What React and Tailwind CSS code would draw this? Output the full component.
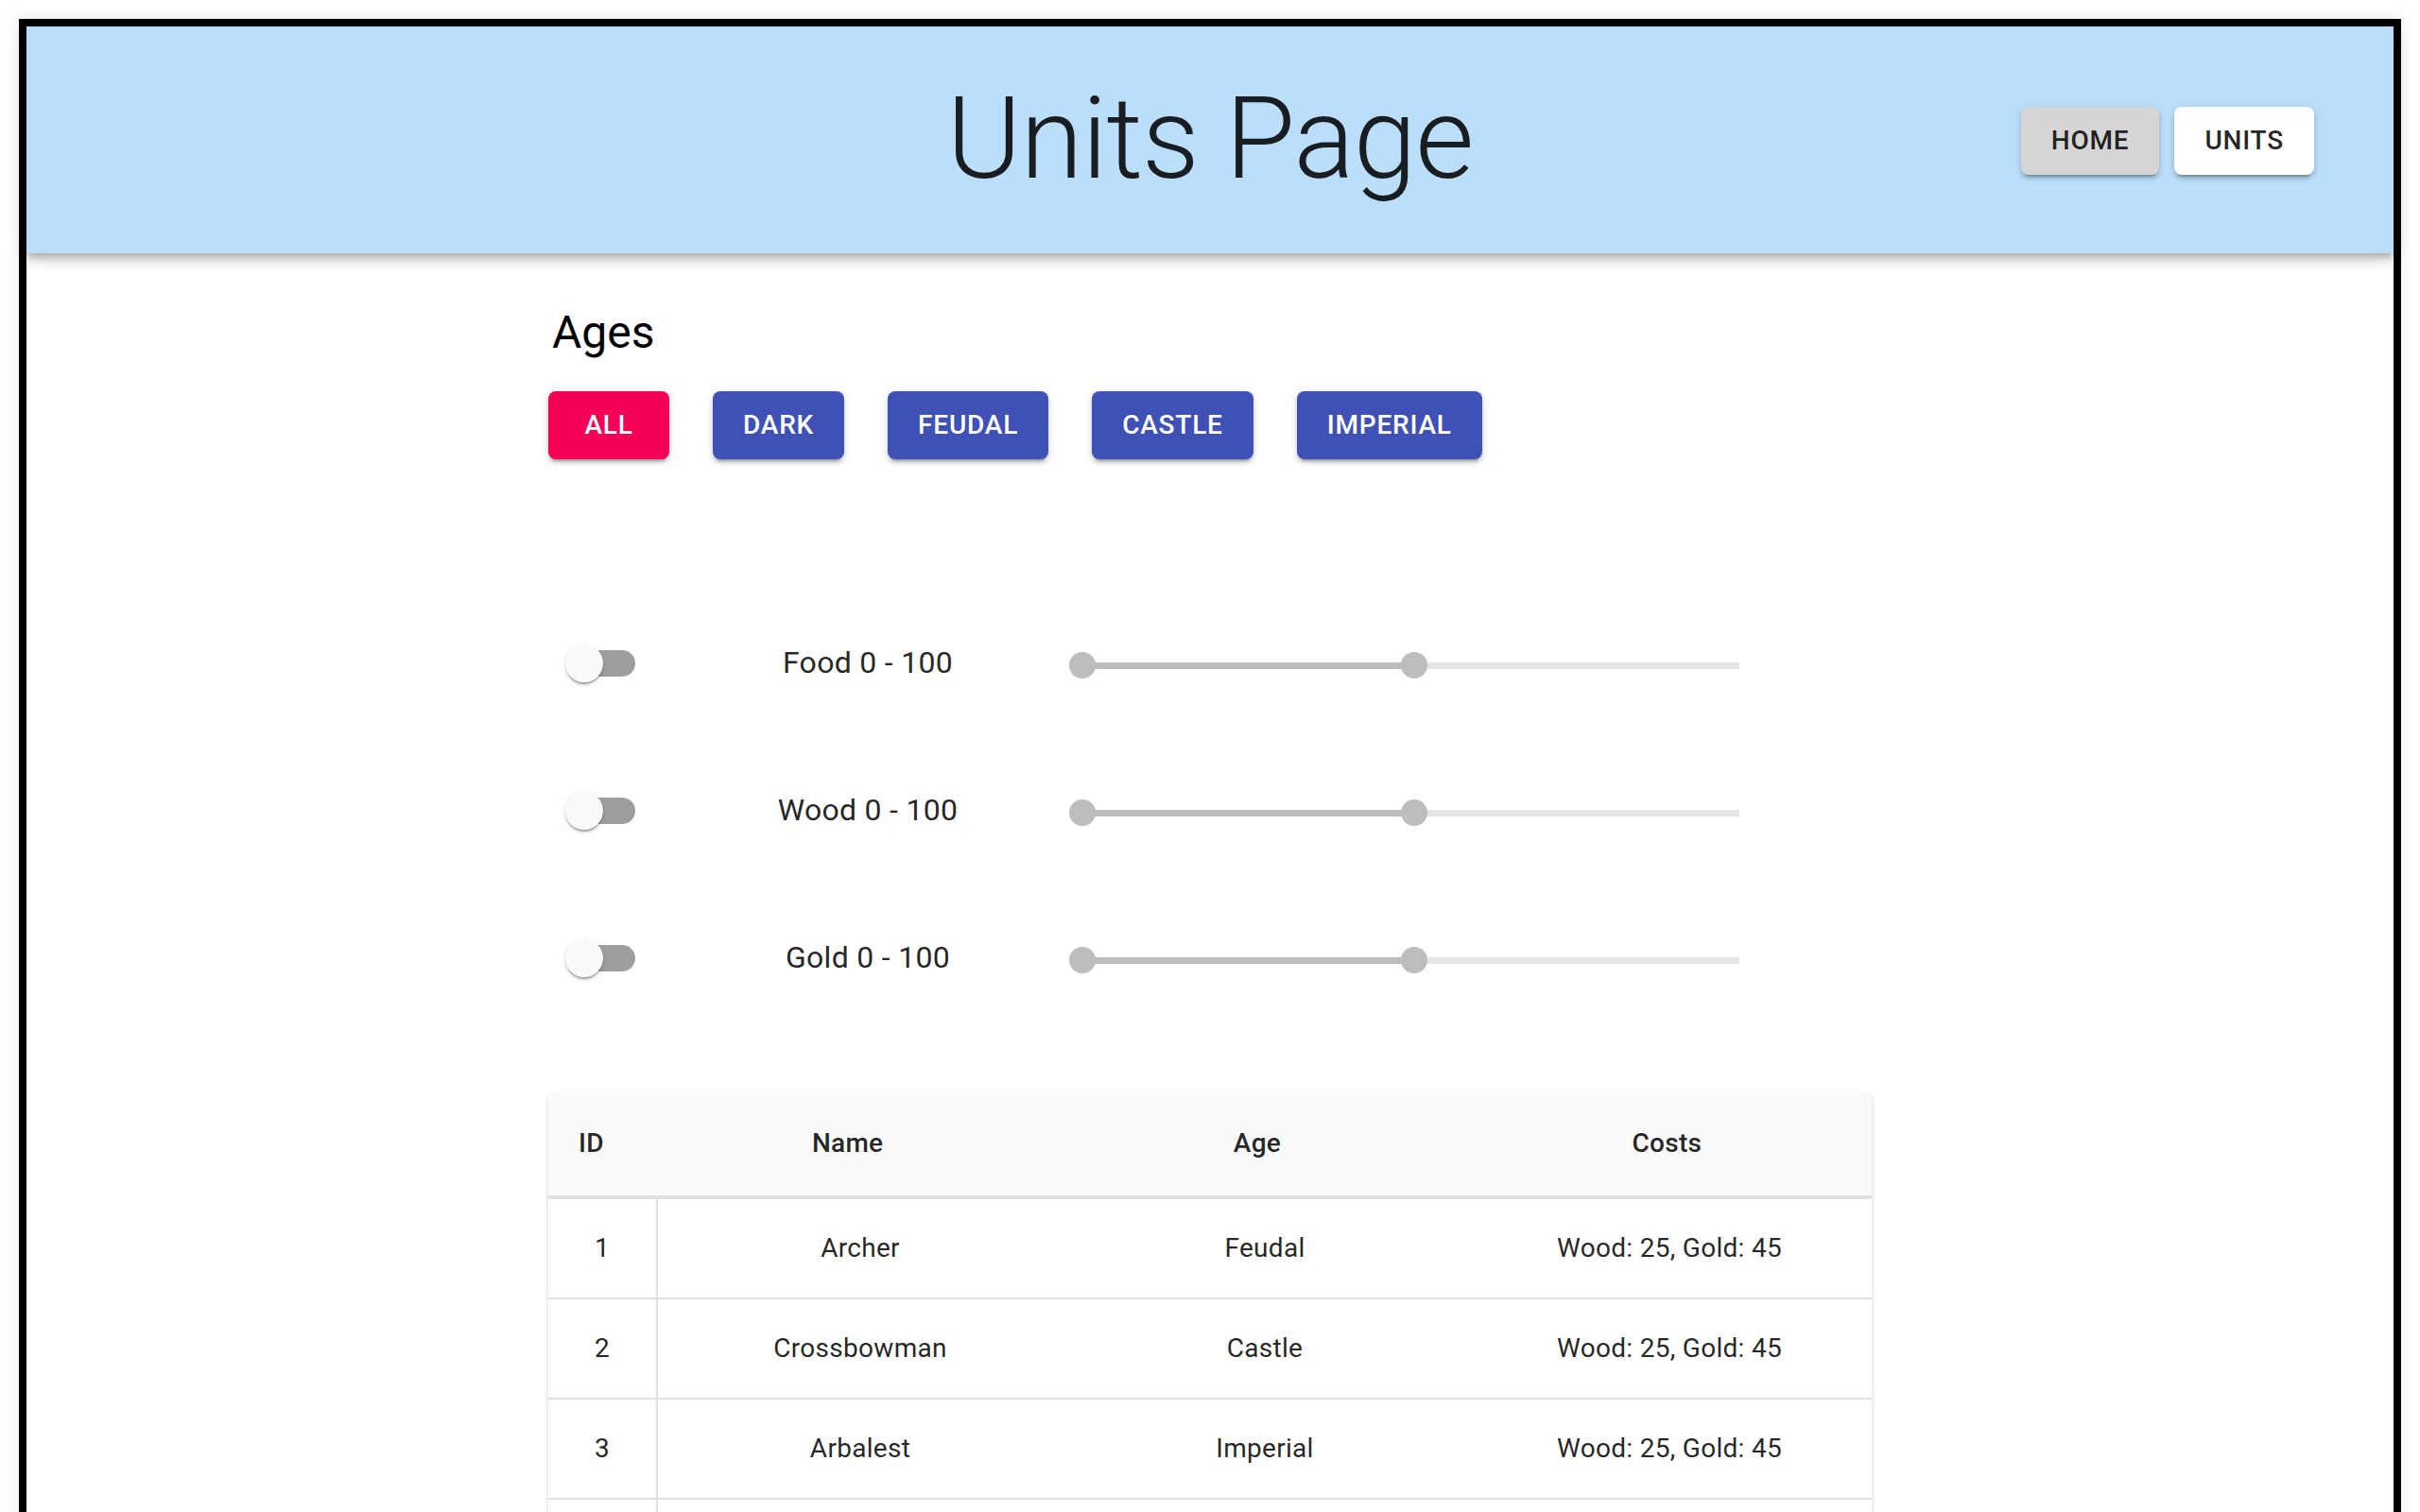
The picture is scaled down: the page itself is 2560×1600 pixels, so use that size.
import React from "react";

const ages = [
  { label: "ALL", active: true },
  { label: "DARK" },
  { label: "FEUDAL" },
  { label: "CASTLE" },
  { label: "IMPERIAL" },
];

const resources = ["Food", "Wood", "Gold"];

const units = [
  { id: 1, name: "Archer", age: "Feudal", costs: "Wood: 25, Gold: 45" },
  { id: 2, name: "Crossbowman", age: "Castle", costs: "Wood: 25, Gold: 45" },
  { id: 3, name: "Arbalest", age: "Imperial", costs: "Wood: 25, Gold: 45" },
  { id: 4, name: "Archer", age: "Feudal", costs: "Wood: 25, Gold: 45" },
  { id: 5, name: "Crossbowman", age: "Castle", costs: "Wood: 25, Gold: 45" },
];

const btnShadow =
  "shadow-[0_6px_2px_-4px_rgba(0,0,0,0.2),0_4px_4px_0_rgba(0,0,0,0.14),0_2px_10px_0_rgba(0,0,0,0.12)]";

function Switch() {
  return (
    <div className="relative w-[116px] h-[76px] shrink-0 flex items-center">
      <div className="ml-[24px] w-[68px] h-[28px] rounded-full bg-[#9e9e9e]" />
      <div className="absolute left-[18px] top-[18px] w-[40px] h-[40px] rounded-full bg-[#fafafa] shadow-[0_4px_2px_-2px_rgba(0,0,0,0.2),0_2px_2px_0_rgba(0,0,0,0.14),0_2px_6px_0_rgba(0,0,0,0.12)]" />
    </div>
  );
}

function Slider() {
  return (
    <div className="relative ml-[5px] mt-[4px] w-[695px] h-[28px] flex items-center">
      <div className="w-full h-[7px] bg-[#e5e5e5]" />
      <div className="absolute left-0 top-[10.5px] w-[351px] h-[7px] bg-[#bdbdbd]" />
      <div className="absolute left-[-14px] top-0 w-[28px] h-[28px] rounded-full bg-[#bdbdbd]" />
      <div className="absolute left-[337px] top-0 w-[28px] h-[28px] rounded-full bg-[#bdbdbd]" />
    </div>
  );
}

export default function App() {
  return (
    <div className="bg-white p-[20px] pb-0 font-['Roboto',sans-serif] text-[rgba(0,0,0,0.87)]">
      <div className="border-[8px] border-b-0 border-black bg-white shadow-[0_0_16px_rgba(0,0,0,0.08)]">
        {/* Header */}
        <header className="relative z-10 h-[240px] bg-[#bbdefb] grid grid-cols-[1fr_auto_1fr] items-center shadow-[0_4px_8px_-2px_rgba(0,0,0,0.2),0_8px_10px_0_rgba(0,0,0,0.14),0_2px_20px_0_rgba(0,0,0,0.12)]">
          <div />
          <h1 className="text-[120px] leading-[1.2] font-light tracking-[-1px] text-[rgba(0,0,0,0.87)] mt-[-2px]">
            Units Page
          </h1>
          <div className="flex justify-end gap-[16px] pr-[84px] mt-[2px]">
            <button
              className={`h-[72px] px-[32px] rounded-[8px] bg-[#d5d5d5] text-[28px] font-medium tracking-[0.8px] text-[rgba(0,0,0,0.87)] ${btnShadow}`}
            >
              HOME
            </button>
            <button
              className={`h-[72px] px-[32px] rounded-[8px] bg-white text-[28px] font-medium tracking-[0.8px] text-[rgba(0,0,0,0.87)] ${btnShadow}`}
            >
              UNITS
            </button>
          </div>
        </header>

        {/* Content */}
        <main className="w-[1400px] mx-auto pt-[52px] pb-[200px]">
          <h5 className="ml-[4px] text-[48px] leading-[64px] font-normal text-black">Ages</h5>
          <div className="mt-[30px] flex gap-[46px]">
            {ages.map((a) => (
              <button
                key={a.label}
                className={`h-[72px] min-w-[128px] px-[32px] rounded-[8px] text-white text-[28px] font-medium tracking-[0.8px] ${btnShadow} ${
                  a.active ? "bg-[#f50057]" : "bg-[#3f51b5]"
                }`}
              >
                {a.label}
              </button>
            ))}
          </div>

          <div className="mt-[138px] flex flex-col">
            {resources.map((r) => (
              <div key={r} className="h-[156px] flex items-center">
                <Switch />
                <div className="w-[444px] text-center text-[32px] tracking-[0.3px] text-[rgba(0,0,0,0.87)] mt-[-2px]">
                  {r} 0 - 100
                </div>
                <Slider />
              </div>
            ))}
          </div>

          {/* Table */}
          <div className="mt-[63px] rounded-[8px] bg-white overflow-hidden shadow-[0_4px_2px_-2px_rgba(0,0,0,0.2),0_2px_2px_0_rgba(0,0,0,0.14),0_2px_6px_0_rgba(0,0,0,0.12)]">
            <div className="h-[114px] bg-[#fafafa] grid grid-cols-[100px_1fr_1fr_1fr] items-center text-[28px] font-medium tracking-[0.3px] border-b-[4px] border-[#e0e0e0]">
              <div className="pl-[32px]">ID</div>
              <div className="text-center">Name</div>
              <div className="text-center">Age</div>
              <div className="text-center">Costs</div>
            </div>
            {units.map((u) => (
              <div
                key={u.id}
                className="h-[106px] grid grid-cols-[116px_1fr_1fr_1fr] items-stretch text-[28px] tracking-[0.3px] border-b-[2px] border-[#e0e0e0]"
              >
                <div className="flex items-center justify-center border-r-[2px] border-[#e0e0e0]">
                  <span>{u.id}</span>
                </div>
                <div className="flex items-center justify-center">
                  <span>{u.name}</span>
                </div>
                <div className="flex items-center justify-center">
                  <span>{u.age}</span>
                </div>
                <div className="flex items-center justify-center">
                  <span>{u.costs}</span>
                </div>
              </div>
            ))}
          </div>
        </main>
      </div>
    </div>
  );
}
